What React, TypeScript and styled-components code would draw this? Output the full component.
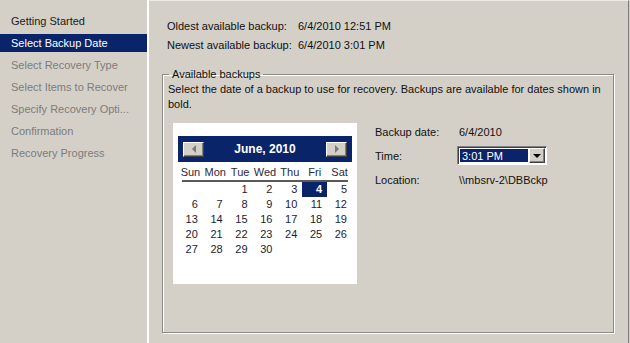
import React from 'react';
import styled, { createGlobalStyle } from 'styled-components';

const GlobalStyle = createGlobalStyle`
  html, body {
    margin: 0;
    padding: 0;
    background: #d4d0c8;
  }
  body {
    font-family: 'Liberation Sans', Arial, sans-serif;
    font-size: 11px;
    color: #111;
  }
`;

const Window = styled.div`
  display: flex;
  width: 630px;
  height: 343px;
  background: #d4d0c8;
  overflow: hidden;
`;

const Sidebar = styled.ul`
  width: 147px;
  flex-shrink: 0;
  margin: 0;
  padding: 12px 0 0;
  list-style: none;
  border-right: 2px solid #fff;
`;

const NavItem = styled.li<{ $state: 'done' | 'active' | 'pending' }>`
  height: 18px;
  line-height: 18px;
  margin-bottom: 4px;
  padding-left: 11px;
  white-space: nowrap;
  background: ${(p) => (p.$state === 'active' ? '#0a246a' : 'transparent')};
  color: ${(p) =>
    p.$state === 'active' ? '#fff' : p.$state === 'done' ? '#1a1a1a' : '#7c7c7c'};
`;

const Content = styled.div`
  flex: 1;
  display: flex;
  flex-direction: column;
  border-top: 1px solid #eeebe6;
  border-right: 1px solid #7c7c7c;
  margin-right: 1px;
  padding: 15px 14px 10px 13px;
`;

const InfoGrid = styled.div`
  display: grid;
  grid-template-columns: 131px auto;
  grid-auto-rows: 19px;
  align-items: center;
  margin-left: 5px;
`;

const GroupBox = styled.fieldset`
  flex: 1;
  margin: 14px 0 0;
  padding: 0 5px;
  min-width: 0;
  border: 1px solid #8c8a86;
  box-shadow: 1px 1px 0 #fff, inset 1px 1px 0 #fff;
`;

const Legend = styled.legend`
  padding: 0 3px;
  margin-left: 1px;
  line-height: 13px;
`;

const Description = styled.p`
  margin: 1px 0 0;
  line-height: 15px;
  width: 438px;
`;

const PickerRow = styled.div`
  display: flex;
  gap: 18px;
  margin: 11px 0 0 5px;
`;

const CalBox = styled.div`
  width: 184px;
  height: 161px;
  box-sizing: border-box;
  flex-shrink: 0;
  background: #fff;
  padding: 13px 5px 0;
  font-size: 11px;
  color: #1c1c30;
`;

const CalHeader = styled.div`
  display: flex;
  align-items: center;
  justify-content: space-between;
  height: 26px;
  padding: 0 5px;
  background: #0a246a;
`;

const CalTitle = styled.span`
  color: #fff;
  font-weight: bold;
  font-size: 12px;
`;

const NavButton = styled.div`
  width: 21px;
  height: 15px;
  box-sizing: border-box;
  display: flex;
  align-items: center;
  justify-content: center;
  background: #d4d0c8;
  border: 1px solid;
  border-color: #fff #404040 #404040 #fff;
  box-shadow: inset -1px -1px 0 #808080;
`;

const Arrow = styled.span<{ $dir: 'left' | 'right' }>`
  width: 0;
  height: 0;
  border-top: 4px solid transparent;
  border-bottom: 4px solid transparent;
  ${(p) =>
    p.$dir === 'left'
      ? 'border-right: 4px solid #7a7a7a;'
      : 'border-left: 4px solid #7a7a7a;'}
`;

const WeekRow = styled.div`
  display: grid;
  grid-template-columns: repeat(7, 1fr);
  margin-top: 2px;
  height: 16px;
  line-height: 16px;
  text-align: center;
  color: #2a2a3c;
`;

const Rule = styled.div`
  height: 2px;
  margin: 0 4px;
  background: #5a5a5a;
`;

const DayGrid = styled.div`
  display: grid;
  grid-template-columns: repeat(7, 1fr);
  grid-auto-rows: 15px;
`;

const Day = styled.div<{ $selected?: boolean }>`
  text-align: right;
  padding-right: 5px;
  line-height: 15px;
  background: ${(p) => (p.$selected ? '#0a246a' : 'transparent')};
  color: ${(p) => (p.$selected ? '#fff' : 'inherit')};
  font-weight: ${(p) => (p.$selected ? 'bold' : 'normal')};
`;

const Details = styled.div`
  display: grid;
  grid-template-columns: 84px auto;
  grid-auto-rows: 19px;
  row-gap: 5px;
  align-items: center;
  align-content: start;
  margin-top: -1px;
`;

const Select = styled.div`
  display: flex;
  width: 90px;
  height: 19px;
  box-sizing: border-box;
  margin-left: -2px;
  padding: 1px;
  background: #fff;
  border: 1px solid;
  border-color: #808080 #fff #fff #808080;
  box-shadow: inset 1px 1px 0 #404040;
`;

const SelectValue = styled.div`
  flex: 1;
  margin: 1px;
  padding-left: 2px;
  line-height: 14px;
  background: #0a246a;
  color: #fff;
`;

const DropButton = styled.div`
  width: 16px;
  box-sizing: border-box;
  display: flex;
  align-items: center;
  justify-content: center;
  background: #d4d0c8;
  border: 1px solid;
  border-color: #fff #404040 #404040 #fff;
  box-shadow: inset -1px -1px 0 #808080;
`;

const DownArrow = styled.span`
  width: 0;
  height: 0;
  border-left: 4px solid transparent;
  border-right: 4px solid transparent;
  border-top: 4px solid #000;
`;

const steps: { label: string; state: 'done' | 'active' | 'pending' }[] = [
  { label: 'Getting Started', state: 'done' },
  { label: 'Select Backup Date', state: 'active' },
  { label: 'Select Recovery Type', state: 'pending' },
  { label: 'Select Items to Recover', state: 'pending' },
  { label: 'Specify Recovery Opti...', state: 'pending' },
  { label: 'Confirmation', state: 'pending' },
  { label: 'Recovery Progress', state: 'pending' },
];

const weekDays = ['Sun', 'Mon', 'Tue', 'Wed', 'Thu', 'Fri', 'Sat'];

// June 2010 starts on a Tuesday
const cells: (number | null)[] = [null, null, ...Array.from({ length: 30 }, (_, i) => i + 1)];

const App: React.FC = () => {
  return (
    <>
      <GlobalStyle />
      <Window>
        <Sidebar>
          {steps.map((s) => (
            <NavItem key={s.label} $state={s.state}>
              {s.label}
            </NavItem>
          ))}
        </Sidebar>
        <Content>
          <InfoGrid>
            <span>Oldest available backup:</span>
            <span>6/4/2010 12:51 PM</span>
            <span>Newest available backup:</span>
            <span>6/4/2010 3:01 PM</span>
          </InfoGrid>
          <GroupBox>
            <Legend>Available backups</Legend>
            <Description>
              Select the date of a backup to use for recovery. Backups are available for dates
              shown in bold.
            </Description>
            <PickerRow>
              <CalBox>
                <CalHeader>
                  <NavButton>
                    <Arrow $dir="left" />
                  </NavButton>
                  <CalTitle>June, 2010</CalTitle>
                  <NavButton>
                    <Arrow $dir="right" />
                  </NavButton>
                </CalHeader>
                <WeekRow>
                  {weekDays.map((d) => (
                    <span key={d}>{d}</span>
                  ))}
                </WeekRow>
                <Rule />
                <DayGrid>
                  {cells.map((d, i) => (
                    <Day key={i} $selected={d === 4}>
                      {d ?? ''}
                    </Day>
                  ))}
                </DayGrid>
              </CalBox>
              <Details>
                <span>Backup date:</span>
                <span>6/4/2010</span>
                <span>Time:</span>
                <Select>
                  <SelectValue>3:01 PM</SelectValue>
                  <DropButton>
                    <DownArrow />
                  </DropButton>
                </Select>
                <span>Location:</span>
                <span>\\mbsrv-2\DBBckp</span>
              </Details>
            </PickerRow>
          </GroupBox>
        </Content>
      </Window>
    </>
  );
};

export default App;
